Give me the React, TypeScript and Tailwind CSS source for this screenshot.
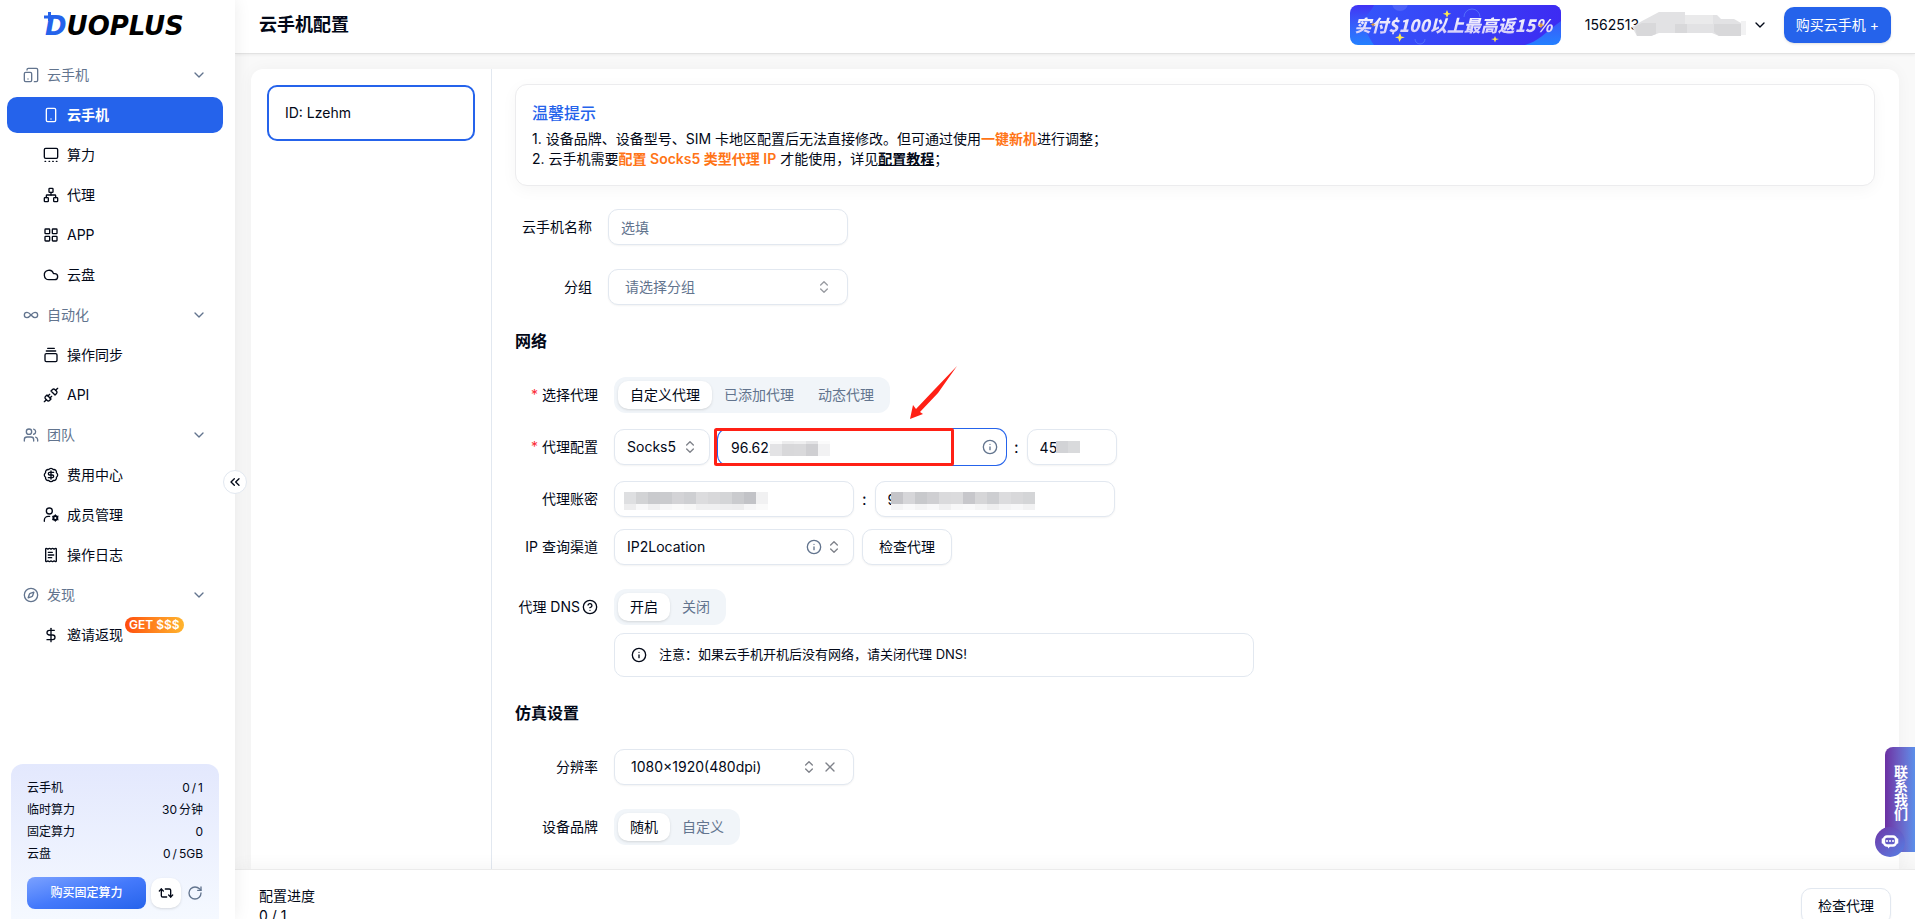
import { useState, type ComponentType, type ReactNode } from "react";
import {
  BadgeDollarSign,
  ChevronDown,
  ChevronsLeft,
  ChevronsUpDown,
  CircleQuestionMark,
  Cloud,
  Compass,
  DollarSign,
  GalleryVerticalEnd,
  Infinity as InfinityIcon,
  Info,
  LayoutGrid,
  Network,
  ReceiptText,
  Repeat2,
  RotateCw,
  Smartphone,
  Unplug,
  Users,
  X,
} from "lucide-react";
import clsx from "clsx";

type Icon = ComponentType<{ className?: string }>;

function DevicesIcon({ className }: { className?: string }) {
  return (
    <svg viewBox="0 0 24 24" fill="none" stroke="currentColor" strokeWidth="2" strokeLinecap="round" className={className}>
      <path d="M6 4.500V4a2 2 0 0 1 2-2h12a2 2 0 0 1 2 2v16a2 2 0 0 1-2 2h-3" />
      <rect x="2" y="8" width="11" height="14" rx="2" />
      <path d="M7.5 18h.01" />
    </svg>
  );
}

function ComputeIcon({ className }: { className?: string }) {
  return (
    <svg viewBox="0 0 24 24" fill="none" stroke="currentColor" strokeWidth="2" strokeLinecap="round" className={className}>
      <rect x="2" y="2" width="20" height="15" rx="2" />
      <path d="M3 21.5h1M9 21.5h1M14.5 21.5h1M20 21.5h1" />
    </svg>
  );
}

function MemberIcon({ className }: { className?: string }) {
  return (
    <svg viewBox="0 0 24 24" fill="none" stroke="currentColor" strokeWidth="2" strokeLinecap="round" className={className}>
      <circle cx="9.5" cy="6" r="4.5" />
      <path d="M2 21.500V20a6 6 0 0 1 6-6h2" />
      <circle cx="18.500" cy="16.500" r="3" strokeWidth="3" />
      <path d="M18.500 11.500v10M14.200 14l8.600 5M14.200 19l8.600-5" strokeWidth="1.500" strokeDasharray="1.500 7" />
    </svg>
  );
}

const MENU: Array<{
  label: string;
  icon: Icon;
  items: Array<{ label: string; icon: Icon; badge?: string }>;
}> = [
  {
    label: "云手机",
    icon: DevicesIcon,
    items: [
      { label: "云手机", icon: Smartphone },
      { label: "算力", icon: ComputeIcon },
      { label: "代理", icon: Network },
      { label: "APP", icon: LayoutGrid },
      { label: "云盘", icon: Cloud },
    ],
  },
  {
    label: "自动化",
    icon: InfinityIcon,
    items: [
      { label: "操作同步", icon: GalleryVerticalEnd },
      { label: "API", icon: Unplug },
    ],
  },
  {
    label: "团队",
    icon: Users,
    items: [
      { label: "费用中心", icon: BadgeDollarSign },
      { label: "成员管理", icon: MemberIcon },
      { label: "操作日志", icon: ReceiptText },
    ],
  },
  {
    label: "发现",
    icon: Compass,
    items: [{ label: "邀请返现", icon: DollarSign, badge: "GET $$$" }],
  },
];

const USAGE = [
  ["云手机", "0", "/", "1"],
  ["临时算力", "30", "分钟"],
  ["固定算力", "0"],
  ["云盘", "0", "/", "5GB"],
];

// Pixel block masks over private values
const MASK_IP = [
  ["#fafafa", "#ececed", "#efeff0", "#e4e4e6", "#fbfbfb"],
  ["#e3e3e5", "#d8d8da", "#d9d9db", "#cfcfd2", "#f2f2f3"],
];
const MASK_PORT = [["#d2d3d6", "#d9dadc"]];
const MASK_USER = [
  ["#dedfe1", "#d2d3d5", "#c9cacd", "#cacbce", "#d3d3d6", "#cecfd2", "#dcdcde", "#d8d8da", "#d4d5d7", "#cacbce", "#c2c3c7", "#f1f1f2"],
  ["#ededee", "#f8f8f9", "#f0f0f1", "#f7f7f8", "#fafafa", "#f7f7f7", "#f0f0f1", "#f0f0f1", "#eeeeef", "#ededee", "#f6f6f7", "#fafafa"],
];
const MASK_PASS = [
  ["#c5c5c9", "#d6d6d9", "#c8c9cc", "#cfcfd2", "#dadadc", "#dbdbdd", "#c7c7cb", "#d6d6d8", "#cdced1", "#dcdcde", "#d8d8da", "#d4d5d7"],
  ["#f4f4f5", "#f9f9fa", "#f4f4f5", "#f8f8f9", "#f0f0f1", "#f7f7f8", "#f9f9fa", "#f4f4f5", "#eeeeef", "#f4f4f5", "#f7f7f8", "#f2f2f3"],
];

function Mask({ rows, heights, className }: { rows: string[][]; heights: number[]; className: string }) {
  const total = heights.reduce((a, b) => a + b, 0);
  return (
    <svg
      width={rows[0].length * 12}
      height={total}
      shapeRendering="crispEdges"
      aria-hidden="true"
      className={clsx("absolute pointer-events-none", className)}
    >
      {rows.map((row, r) =>
        row.map((color, c) => (
          <rect
            key={`${r}-${c}`}
            x={c * 12}
            y={heights.slice(0, r).reduce((a, b) => a + b, 0)}
            width={12}
            height={heights[r]}
            fill={color}
          />
        ))
      )}
    </svg>
  );
}

const fieldClass =
  "h-9 rounded-[10px] border border-slate-200 bg-white text-sm text-[#020817] shadow-xs outline-none placeholder:text-slate-500";

function Row({ label, htmlFor, wide, required, children }: {
  label: ReactNode;
  htmlFor?: string;
  wide?: boolean;
  required?: boolean;
  children: ReactNode;
}) {
  return (
    <div className="flex items-center gap-4">
      <label
        htmlFor={htmlFor}
        className={clsx("flex shrink-0 items-center justify-end whitespace-nowrap text-sm", wide ? "w-[83px]" : "w-[77px]")}
      >
        {required && <span className="mr-1 text-red-500">*</span>}
        {label}
      </label>
      {children}
    </div>
  );
}

function Tabs({ options }: { options: string[] }) {
  const [active, setActive] = useState(options[0]);

  return (
    <div className="flex h-9 items-center rounded-xl bg-slate-100 p-1">
      {options.map((option) => (
        <button
          key={option}
          onClick={() => setActive(option)}
          className={clsx(
            "h-7 rounded-[10px] px-3 text-sm",
            active === option ? "bg-white text-[#020817] shadow" : "text-slate-500"
          )}
        >
          {option}
        </button>
      ))}
    </div>
  );
}

function Sidebar() {
  return (
    <aside className="relative z-20 flex w-[235px] shrink-0 flex-col bg-white shadow-[0_0_16px_rgba(0,0,0,0.08)]">
      <a href="#" aria-label="DUOPLUS" className="relative ml-[45px] mt-3 block h-7 font-['DejaVu_Sans',sans-serif] text-[26px]/7 font-bold italic text-black">
        <span className="text-[#2563eb]">D</span>UOPLUS
        <svg width="10" height="10" viewBox="0 0 10 10" className="absolute -left-px top-0" aria-hidden="true">
          <path d="M5.5 0v9M0 5h9" stroke="#2563eb" strokeWidth="3" />
        </svg>
      </a>

      <nav className="mt-[17px] flex flex-col gap-1 pl-[7px] pr-3">
        {MENU.map((group) => (
          <div key={group.label} className="flex flex-col gap-1">
            <button className="flex h-9 items-center gap-2 px-4 text-sm text-slate-500">
              <group.icon className="size-4" />
              {group.label}
              <ChevronDown className="ml-auto size-4" />
            </button>
            {group.items.map((item, i) => {
              const active = group === MENU[0] && i === 0;
              return (
                <a
                  key={item.label}
                  href="#"
                  className={clsx(
                    "relative flex h-9 items-center gap-2 rounded-[10px] pl-9 text-sm",
                    active ? "bg-[#2563eb] font-bold text-white" : "text-[#020817]"
                  )}
                >
                  <item.icon className="size-4" />
                  {item.label}
                  {item.badge && (
                    <span className="absolute left-[118px] top-0 h-4 rounded-full bg-linear-to-r from-[#ff4a0d] to-[#ffb42e] px-1 text-xs/4 font-semibold text-white">
                      {item.badge}
                    </span>
                  )}
                </a>
              );
            })}
          </div>
        ))}
      </nav>

      {/* Usage card */}
      <div className="ml-[11px] mr-4 mt-auto h-[155px] rounded-t-xl bg-linear-to-b from-[#e3e8fd] to-[#f5f9ff] px-4 pt-[13px] text-xs">
        <dl>
          {USAGE.map(([label, ...value]) => (
            <div key={label} className="flex h-[22px] items-center justify-between">
              <dt>{label}</dt>
              <dd className="flex gap-0.5">
                {value.map((part) => (
                  <span key={part}>{part}</span>
                ))}
              </dd>
            </div>
          ))}
        </dl>
        <div className="mt-3 flex items-center">
          <button className="h-8 flex-1 rounded-lg bg-linear-to-br from-[#7ba1ff] via-[#4479fb] to-[#2563eb] font-medium text-white">
            购买固定算力
          </button>
          <button aria-label="转换" className="ml-[5px] flex h-[30px] w-[30px] items-center justify-center rounded-[10px] bg-white shadow">
            <Repeat2 className="size-4" />
          </button>
          <button aria-label="刷新" className="ml-1.5 text-slate-500">
            <RotateCw className="size-4" />
          </button>
        </div>
      </div>

      <button
        aria-label="收起"
        className="absolute -right-3 top-[470px] flex size-6 items-center justify-center rounded-full border border-slate-200 bg-white"
      >
        <ChevronsLeft className="size-4" />
      </button>
    </aside>
  );
}

function Banner() {
  return (
    <a
      href="#"
      className="relative flex h-10 w-[211px] items-center justify-center overflow-hidden rounded-lg bg-linear-to-b from-[#4032f5] to-[#2380ff]"
    >
      <svg viewBox="0 0 211 40" className="absolute inset-0" aria-hidden="true">
        <defs>
          <linearGradient id="blob" x1="0" x2="1">
            <stop offset="0" stopColor="#3455fa" />
            <stop offset="1" stopColor="#3d2bf2" />
          </linearGradient>
        </defs>
        <path d="M24 0c-3 8-15 14-8 26 3 6 5 10 8 14h151c12-3 20-12 36-24V0z" fill="url(#blob)" />
        <circle cx="50" cy="-2" r="8" fill="#fff" opacity=".12" />
        <path d="M114 12a8 8 0 0 1 16 0M65 34a5 5 0 0 0 10 0" fill="none" stroke="#6f9bff" opacity=".5" />
      </svg>
      <span className="relative whitespace-nowrap bg-linear-to-b from-white to-[#cfc6f8] bg-clip-text pr-1 font-['Noto_Sans_CJK_SC',sans-serif] text-[17px]/6 font-black italic text-transparent">
        实付$100以上最高返15%
      </span>
      <svg viewBox="0 0 211 40" className="absolute inset-0" aria-hidden="true">
        <g fill="#ffe94d">
          <path d="M97 5l1.3 3 3 .7-3 1-1.3 3-1.3-3-3-1 3-.7z" />
          <path d="M50 28l1.3 3.5 3.5.7-3.5 1.2-2 3.6-.9-3.6-3.4-1.2 3.4-.7z" />
          <path d="M145 31l1 2.4 3 .6-3 1-1 2.6-1-2.6-3-1 3-.6z" />
        </g>
        <path d="M191 17l1 2.4 3 .6-3 1-1 2.4-1-2.4-3-1 3-.6zM23 17l.7 2 2 .6-2 .6-.7 2-.7-2-2-.6 2-.6z" fill="#e09a3a" />
      </svg>
    </a>
  );
}

function Header() {
  return (
    <header className="relative z-10 flex h-[54px] shrink-0 items-start justify-between border-b border-[#e2e2e2] bg-white px-6 shadow-[0_1px_3px_rgba(0,0,0,0.06)]">
      <h1 className="mt-[11px] text-lg/7 font-semibold">云手机配置</h1>
      <div className="flex items-center pt-[5px]">
        <Banner />
        <button className="relative ml-6 flex h-9 w-[183px] items-center justify-between text-sm">
          1562513
          <svg width="114" height="24" className="absolute left-[47px] top-[5px]" aria-hidden="true">
            <path d="M0 15L10 9 27 0h26v3h32l4 4h13l7 4v13H87l-7-3H27l-8 3H5z" fill="#e2e2e4" />
            <path d="M3 15l7-4h14v11l-5 2H5zM43 12h12v9H43zM82 12h27v12H87l-5-4z" fill="#d8d8da" />
            <path d="M53 3h28v9H53z" fill="#eaeaeb" />
            <path d="M109 9h5v14h-5z" fill="#f2f2f3" />
          </svg>
          <ChevronDown className="size-4" />
        </button>
        <button className="ml-4 h-9 rounded-[10px] bg-[#2563eb] px-3 text-sm text-white shadow-sm">购买云手机 +</button>
      </div>
    </header>
  );
}

function Tips() {
  return (
    <section className="h-[102px] rounded-xl border border-[#ececee] bg-white px-4 pt-4 shadow-[0_4px_16px_rgba(0,0,0,0.04)]">
      <h2 className="text-base/6 font-medium text-[#2563eb]">温馨提示</h2>
      <ol className="mt-1 text-sm/5">
        <li>
          1. 设备品牌、设备型号、SIM 卡地区配置后无法直接修改。但可通过使用
          <strong className="font-semibold text-[#ff7416]">一键新机</strong>进行调整；
        </li>
        <li>
          2. 云手机需要<strong className="font-semibold text-[#ff7416]">配置 Socks5 类型代理 IP</strong> 才能使用，详见
          <a href="#" className="font-semibold underline">配置教程</a>；
        </li>
      </ol>
    </section>
  );
}

function ProxyForm() {
  return (
    <>
      <h2 className="mt-6 text-base/6 font-semibold">网络</h2>

      <div className="mt-6 flex flex-col gap-4">
        <Row label="选择代理" wide required>
          <Tabs options={["自定义代理", "已添加代理", "动态代理"]} />
        </Row>

        <Row label="代理配置" htmlFor="proxy-host" wide required>
          <div className="flex items-center gap-2">
            <div className="relative">
              <select aria-label="代理类型" className={clsx(fieldClass, "w-24 appearance-none pl-3")}>
                <option>Socks5</option>
              </select>
              <ChevronsUpDown className="pointer-events-none absolute right-3 top-2.5 size-4 opacity-50" />
            </div>
            <div className="relative">
              <input
                id="proxy-host"
                defaultValue="96.62."
                className="h-9 w-72 rounded-[10px] border border-transparent bg-white px-3 text-sm outline-none ring-1 ring-[#2563eb]"
              />
              <Mask rows={MASK_IP} heights={[3, 12]} className="left-[52px] top-3" />
              <Info className="absolute right-2 top-2.5 size-4 text-slate-500" />
              {/* Red marker frame with arrow */}
              <svg width="260" height="110" className="pointer-events-none absolute -left-2.5 -top-[70px]" aria-hidden="true">
                <rect x="7.5" y="70.5" width="237" height="35" rx="1" fill="none" stroke="#ff2015" strokeWidth="3" />
                <path d="M249 7L226 31 208 50l-3-4-3 14 13-5-3-2 18-19z" fill="#ff2015" />
              </svg>
            </div>
            <span>:</span>
            <div className="relative">
              <input aria-label="端口" defaultValue="45" className={clsx(fieldClass, "w-[90px] px-3")} />
              <Mask rows={MASK_PORT} heights={[12]} className="left-[29px] top-3" />
            </div>
          </div>
        </Row>

        <Row label="代理账密" htmlFor="proxy-user" wide>
          <div className="flex items-center gap-2">
            <div className="relative">
              <input id="proxy-user" className={clsx(fieldClass, "w-60 px-3")} />
              <Mask rows={MASK_USER} heights={[12, 6]} className="left-2.5 top-[11px]" />
            </div>
            <span>:</span>
            <div className="relative">
              <input aria-label="代理密码" defaultValue="9" className={clsx(fieldClass, "w-60 px-3")} />
              <Mask rows={MASK_PASS} heights={[12, 6]} className="left-4 top-[11px]" />
            </div>
          </div>
        </Row>
      </div>

      <div className="mt-3">
        <Row label="IP 查询渠道" htmlFor="ip-channel" wide>
          <div className="flex items-center gap-2">
            <div className="relative">
              <select id="ip-channel" className={clsx(fieldClass, "w-60 appearance-none pl-3")}>
                <option>IP2Location</option>
              </select>
              <Info className="absolute right-8 top-2.5 size-4 text-slate-500" />
              <ChevronsUpDown className="pointer-events-none absolute right-3 top-2.5 size-4 opacity-50" />
            </div>
            <button className={clsx(fieldClass, "px-4")}>检查代理</button>
          </div>
        </Row>
      </div>

      <div className="mt-6">
        <Row
          wide
          label={
            <>
              代理 DNS
              <CircleQuestionMark className="ml-0.5 size-4" />
            </>
          }
        >
          <Tabs options={["开启", "关闭"]} />
        </Row>
        <div className="ml-[99px] mt-2 flex h-11 max-w-[640px] items-center gap-3 rounded-[10px] border border-slate-200 px-4 text-[13px]">
          <Info className="size-4" />
          注意：如果云手机开机后没有网络，请关闭代理 DNS!
        </div>
      </div>
    </>
  );
}

function DeviceForm() {
  return (
    <>
      <h2 className="mt-6 text-base/6 font-semibold">仿真设置</h2>
      <div className="mt-6 flex flex-col gap-6">
        <Row label="分辨率" htmlFor="resolution" wide>
          <div className="relative">
            <select id="resolution" className={clsx(fieldClass, "w-60 appearance-none pl-4")}>
              <option>1080×1920(480dpi)</option>
            </select>
            <ChevronsUpDown className="pointer-events-none absolute right-[37px] top-2.5 size-4 opacity-50" />
            <button aria-label="清除" className="absolute right-4 top-2.5 opacity-50">
              <X className="size-4" />
            </button>
          </div>
        </Row>
        <Row label="设备品牌" wide>
          <Tabs options={["随机", "自定义"]} />
        </Row>
      </div>
    </>
  );
}

export default function App() {
  return (
    <div className="flex h-screen overflow-hidden bg-[#f9f9f9] font-['Inter','Noto_Sans_CJK_SC',sans-serif] text-[#020817]">
      <Sidebar />

      <div className="flex min-w-0 flex-1 flex-col">
        <Header />

        <main className="flex min-h-0 flex-1 overflow-hidden px-4 pt-[15px]">
          <div className="flex min-w-0 flex-1 rounded-t-xl bg-white shadow-[0_0_16px_rgba(0,0,0,0.04)]">
            <div className="w-60 shrink-0 p-4">
              <button className="flex h-14 w-full items-center rounded-[10px] border-2 border-[#2563eb] px-4 text-sm">
                ID: Lzehm
              </button>
            </div>

            <div className="min-w-0 flex-1 overflow-hidden border-l border-slate-200 pl-[23px] pr-6 pt-[15px]">
              <Tips />
              <div className="mt-[23px] flex flex-col gap-6">
                <Row label="云手机名称" htmlFor="phone-name">
                  <input id="phone-name" placeholder="选填" className={clsx(fieldClass, "w-60 px-3")} />
                </Row>
                <Row label="分组" htmlFor="phone-group">
                  <div className="relative">
                    <select id="phone-group" className={clsx(fieldClass, "w-60 appearance-none pl-4 text-slate-500")}>
                      <option>请选择分组</option>
                    </select>
                    <ChevronsUpDown className="pointer-events-none absolute right-4 top-2.5 size-4 opacity-40" />
                  </div>
                </Row>
              </div>
              <ProxyForm />
              <DeviceForm />
            </div>
          </div>
        </main>

        <footer className="relative flex h-[50px] shrink-0 items-start justify-between border-t border-[#ebebeb] bg-white px-6 pt-4 text-sm/5 shadow-[0_-4px_16px_rgba(0,0,0,0.04)]">
          <div>
            <p>配置进度</p>
            <p>0 / 1</p>
          </div>
          <button className={clsx(fieldClass, "mt-0.5 shrink-0 px-4")}>检查代理</button>
        </footer>
      </div>

      {/* Contact tab stuck to the window edge */}
      <button className="fixed right-0 top-[747px] z-30 h-[105px] w-[30px] rounded-l-lg bg-linear-to-r from-[#6b2fa3] to-[#5a8fea] text-sm/5 font-bold text-white">
        <span className="absolute left-[5px] top-[18px] [writing-mode:vertical-rl]">联系我们</span>
        <span className="absolute -left-2.5 top-20 flex size-[30px] items-center justify-center rounded-full bg-linear-to-br from-[#6b35a8] to-[#4f80e6]">
          <svg width="18" height="16" viewBox="0 0 18 16" fill="none" aria-hidden="true">
            <rect x="3" y="2.5" width="12" height="9" rx="3" stroke="#fff" strokeWidth="2.4" />
            <path d="M1.5 5v4M16.5 5v4" stroke="#fff" strokeWidth="1.6" strokeLinecap="round" />
            <path d="M6 7h.01M9 7h.01M12 7h.01" stroke="#fff" strokeWidth="2" strokeLinecap="round" />
            <path d="M6 11.5l1.500 3 2-3z" fill="#fff" />
          </svg>
        </span>
      </button>
    </div>
  );
}
